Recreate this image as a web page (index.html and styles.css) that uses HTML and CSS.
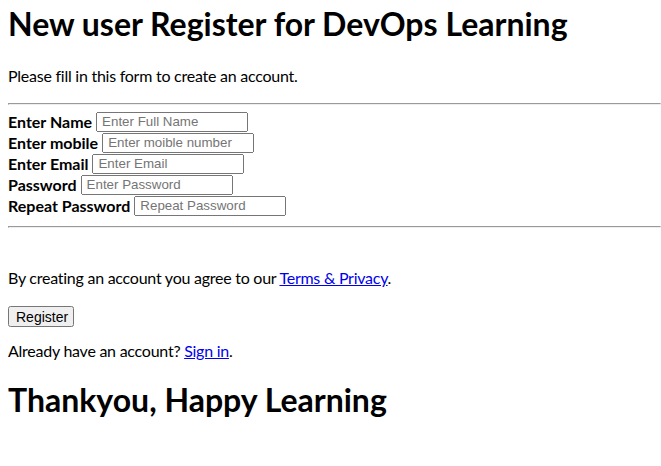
FILE: index.html
```html
<!DOCTYPE html>
<html lang="en">
<head>
  <meta charset="UTF-8">
  <title>DevOps Learning Register</title>
  <link rel="stylesheet" href="styles.css">
</head>
<body>
  <form action="#">
    <div class="container">
      <h1 class="title">New user Register for DevOps Learning</h1>
      <p class="intro">Please fill in this form to create an account.</p>
      <hr class="top-rule">

      <div class="fields">
        <div class="row">
          <label for="Name"><b>Enter Name</b></label>
          <input type="text" placeholder="Enter Full Name" name="Name" id="Name" required>
        </div>
        <div class="row">
          <label for="mobile"><b>Enter mobile</b></label>
          <input type="text" placeholder="Enter moible number" name="mobile" id="mobile" required>
        </div>
        <div class="row">
          <label for="email"><b>Enter Email</b></label>
          <input type="text" placeholder="Enter Email" name="email" id="email" required>
        </div>
        <div class="row">
          <label for="psw"><b>Password</b></label>
          <input type="password" placeholder="Enter Password" name="psw" id="psw" required>
        </div>
        <div class="row">
          <label for="psw-repeat"><b>Repeat Password</b></label>
          <input type="password" placeholder="Repeat Password" name="psw-repeat" id="psw-repeat" required>
        </div>
      </div>
      <hr>

      <p class="terms">By creating an account you agree to our <a href="#">Terms &amp; Privacy</a>.</p>
      <button type="submit" class="registerbtn">Register</button>
    </div>

    <div class="container signin">
      <p>Already have an account? <a href="#">Sign in</a>.</p>
    </div>

    <h1 class="thanks">Thankyou, Happy Learning</h1>
  </form>
</body>
</html>
```

FILE: styles.css
```css
body {
  font-family: Lato, "Liberation Sans", sans-serif;
  margin: 8px 0 8px 8px;
}
p {
  letter-spacing: -0.25px;
}
.title {
  margin: 0 0 26px;
  line-height: 1;
}
.intro {
  margin-bottom: 18px;
}
.top-rule {
  margin-bottom: 6px;
}
/* one line per field, label then box */
.fields {
  margin-bottom: 10px;
}
.row {
  display: flex;
  align-items: center;
  gap: 4px;
  height: 21px;
}
input, button {
  font-family: "Liberation Sans", Arial, sans-serif;
}
input {
  width: 152px;
  height: 20px;
  box-sizing: border-box;
  padding: 1px 4px;
}
.terms {
  margin-top: 40px;
}
.registerbtn {
  display: block;
  width: 66px;
  height: 21px;
  margin-top: 19px;
  font-size: 14px;
}
.signin p {
  margin-top: 14px;
}
.thanks {
  margin-top: 20px;
}
```
